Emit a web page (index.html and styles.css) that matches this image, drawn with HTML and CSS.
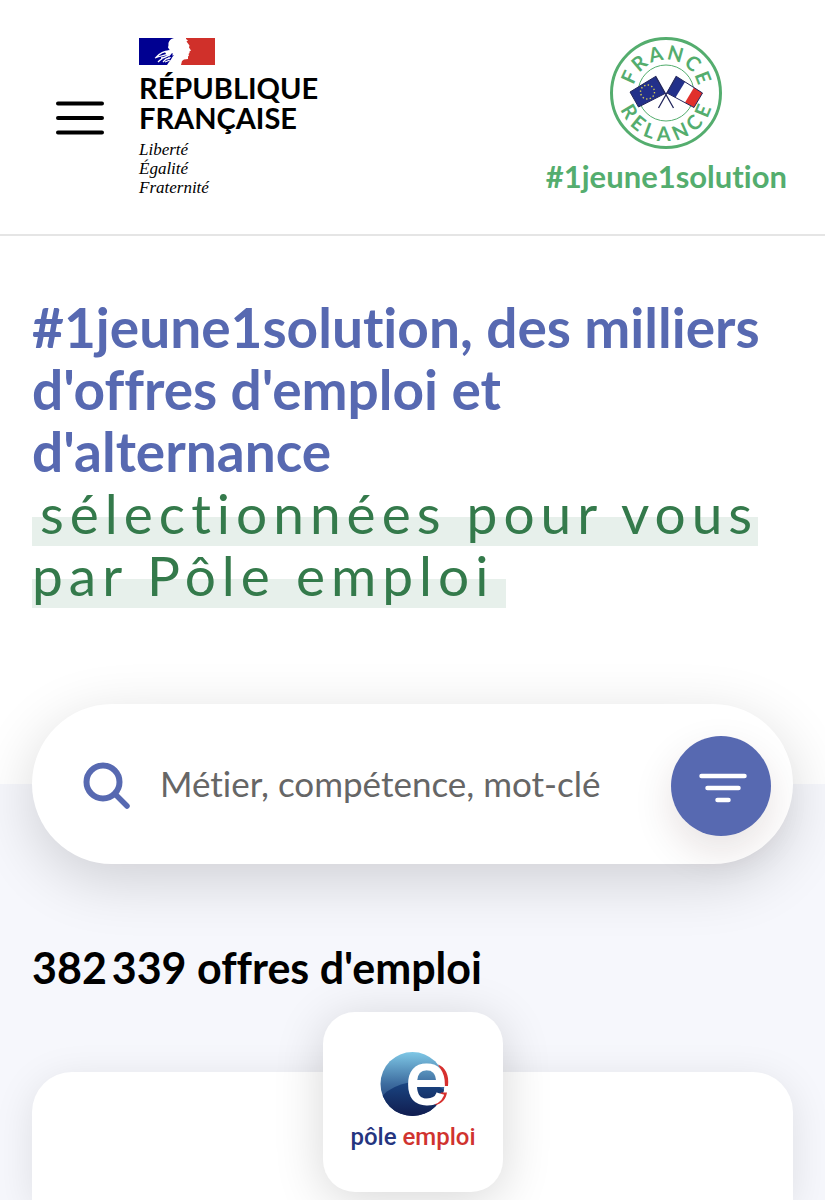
FILE: index.html
```html
<!DOCTYPE html>
<html lang="fr">
<head>
<meta charset="utf-8">
<meta name="viewport" content="width=device-width, initial-scale=1">
<title>#1jeune1solution – Offres d'emploi</title>
<link rel="stylesheet" href="styles.css">
</head>
<body>
<header class="header">
  <button class="menu" type="button" aria-label="Menu">
    <svg width="48" height="34" viewBox="0 0 48 34" fill="none" stroke="#000" stroke-width="4" stroke-linecap="round"><path d="M2 2.500H46M2 17H46M2 31.500H46"/></svg>
  </button>
  <a class="state" href="#">
    <svg class="flag" width="76" height="27" viewBox="0 0 76 27" aria-hidden="true">
      <path fill="#000091" d="M0 0H35C31 1 29 4 29.500 7L29 9.500L31 12.500L33 14V20L30 24L28 27H0Z"/>
      <path fill="#d0302a" d="M47 0H76V27H42L43 23L45 21.500L49 21L49 18.500L50 17.500L49.500 16L50.500 15L50.500 13.500L52 12.500L50 9.500L50.500 7.500L47.500 3.500L49 2.500L47 1Z"/>
      <path fill="none" stroke="#fff" stroke-width="1.300" d="M30 13C25 13 21 15 17 19.500M31 15C27 18 22 17 16 20M31 17C27 18 26 20 22 20M24 20C21 22 20 23 19 24M31 20L27 21L24 24M31 22L26 24"/>
      <path fill="#fff" d="M26 14L33 11L36 16L32 21L29 20L31 17L27 16Z"/>
      <path fill="none" stroke="#000091" stroke-width="1.200" d="M33.500 15.500L31 18.500L33.500 18L30.500 22"/>
    </svg>
    <span class="state-name">RÉPUBLIQUE<br>FRANÇAISE</span>
    <span class="motto">Liberté<br>Égalité<br>Fraternité</span>
  </a>
  <a class="brand" href="#">
    <svg class="seal" width="114" height="114" viewBox="0 0 114 114" role="img" aria-label="France Relance">
      <defs>
        <path id="arc-top" d="M24 57A33 33 0 0 1 90 57"/>
        <path id="arc-bottom" d="M9 57A48 48 0 0 0 105 57"/>
      </defs>
      <circle cx="57" cy="57" r="54.500" fill="#fff" stroke="#54ad6e" stroke-width="3"/>
      <circle cx="57" cy="57" r="28" fill="none" stroke="#54ad6e" stroke-width="1"/>
      <text class="seal-text" text-anchor="middle"><textPath href="#arc-top" startOffset="51%">FRANCE</textPath></text>
      <text class="seal-text seal-text-bottom" text-anchor="middle"><textPath href="#arc-bottom" startOffset="52%">RELANCE</textPath></text>
      <path stroke="#22265c" stroke-width="1.300" d="M46.500 40L64.500 72M67.500 40L49.500 72"/>
      <path fill="#22308a" stroke="#22265c" stroke-width="1" d="M21 56L46.500 40.500L56 57.500L29.500 71Z"/>
      <circle cx="38.500" cy="56" r="7" fill="none" stroke="#d7cf55" stroke-width="1.400" stroke-dasharray="1.400 2.265"/>
      <path fill="#fff" d="M67.500 40.500L93.500 57L85 71.500L58 57Z"/>
      <path fill="#22308a" d="M67.500 40.500L76 46L66.500 61.500L58 57Z"/>
      <path fill="#e1302c" d="M85 51.500L93.500 57L85 71.500L76 66.500Z"/>
      <path fill="none" stroke="#22265c" stroke-width="1" d="M67.500 40.500L93.500 57L85 71.500L58 57Z"/>
    </svg>
    <span class="brand-name">#1jeune1solution</span>
  </a>
</header>

<main class="main">
  <section class="hero">
    <h1 class="title">#1jeune1solution, des milliers d'offres d'emploi et d'alternance
      <span class="title-accent"><mark>sélectionnées pour vous par Pôle emploi</mark></span></h1>
    <form class="search" role="search">
      <svg class="search-icon" width="48" height="48" viewBox="0 0 48 48" fill="none" stroke="#5769b1" stroke-width="6" stroke-linecap="round" aria-hidden="true"><circle cx="20" cy="20" r="16.500"/><path d="M32 32L44 44" stroke-width="5.500"/></svg>
      <input class="search-input" type="search" placeholder="Métier, compétence, mot-clé" aria-label="Métier, compétence, mot-clé">
      <button class="filter" type="button" aria-label="Filtres">
        <svg width="48" height="30" viewBox="0 0 48 30" fill="none" stroke="#fff" stroke-width="4.500" stroke-linecap="round"><path d="M2.500 3H45.500M8.500 15H39.500M18.500 27H29.500"/></svg>
      </button>
    </form>
  </section>

  <section class="results">
    <h2 class="count">382<span class="thousands">&nbsp;</span>339 offres d'emploi</h2>
    <article class="card">
      <div class="logo">
        <svg width="180" height="180" viewBox="0 0 180 180" role="img" aria-label="pôle emploi">
          <defs>
            <linearGradient id="ball" x1="0" y1="0" x2="0" y2="1"><stop offset="0" stop-color="#7fc8e6"/><stop offset=".5" stop-color="#3d6c9f"/><stop offset="1" stop-color="#152c66"/></linearGradient>
            <linearGradient id="shade" x1="0" y1="0" x2="0" y2="1"><stop offset="0" stop-color="#1a4683"/><stop offset=".5" stop-color="#111f52"/></linearGradient>
            <clipPath id="disc"><circle cx="89.500" cy="72" r="32"/></clipPath>
          </defs>
          <circle cx="89.500" cy="72" r="32" fill="url(#ball)"/>
          <ellipse cx="94" cy="102" rx="42" ry="32" fill="url(#shade)" clip-path="url(#disc)"/>
          <path fill="#d7302e" d="M115 52.500C122 55 126.500 63 125 74H119V60ZM124 80.500C123 87 119 92 112 93L118 80.500Z"/>
          <text class="logo-e" x="83" y="92">e</text>
          <text class="logo-name" x="90" y="133" text-anchor="middle"><tspan fill="#25357f">pôle</tspan> <tspan fill="#d0332f">emploi</tspan></text>
        </svg>
      </div>
    </article>
  </section>
</main>
</body>
</html>
```

FILE: styles.css
```css
* {
  box-sizing: border-box;
}

body {
  margin: 0;
  min-height: 100vh;
  display: flex;
  flex-direction: column;
  background: #fff;
  color: #000;
  font-family: Lato, "Open Sans", sans-serif;
  font-variant-ligatures: none;
}

a {
  color: inherit;
  text-decoration: none;
}

button {
  border: 0;
  padding: 0;
  background: none;
  cursor: pointer;
}

svg {
  display: block;
}

/* Header */

.header {
  display: flex;
  align-items: flex-start;
  padding: 36px 38px 37px 56px;
  border-bottom: 2px solid #e5e5e5;
}

.menu {
  align-self: center;
  margin: 2px 35px 0 0;
}

.state {
  display: flex;
  flex-direction: column;
  padding-top: 2px;
}

.state-name {
  margin-top: 8px;
  font-size: 29px;
  font-weight: 700;
  line-height: 30px;
}

.motto {
  margin-top: 7px;
  font-family: "Liberation Serif", serif;
  font-style: italic;
  font-size: 17px;
  line-height: 19px;
}

.brand {
  display: flex;
  flex-direction: column;
  align-items: center;
  margin-left: auto;
  color: #54ad6e;
}

.seal-text {
  fill: #54ad6e;
  font-size: 20px;
  font-weight: 700;
  letter-spacing: 2px;
}

.seal-text-bottom {
  letter-spacing: 5px;
}

.brand-name {
  margin-top: 8px;
  font-size: 31px;
  font-weight: 700;
  line-height: 36px;
}

/* Title and search */

.main {
  flex: 1;
  display: flex;
  flex-direction: column;
}

.hero {
  padding: 60px 32px 0;
}

.title {
  margin: 0;
  color: #5769b1;
  font-size: 55px;
  font-weight: 700;
  line-height: 62px;
}

.title-accent {
  display: block;
  color: #347a4b;
  font-weight: 400;
  letter-spacing: 6px;
}

.title-accent mark {
  padding: 0 12px 0 8px;
  color: inherit;
  background: linear-gradient(transparent 56%, #e7f0eb 56%);
}

.search {
  display: flex;
  align-items: center;
  position: relative;
  height: 160px;
  margin-top: 98px;
  padding: 4px 22px 0 51px;
  border-radius: 80px;
  background: #fff;
  box-shadow: 0 16px 60px rgba(0, 0, 0, 0.16);
}

.search-input {
  flex: 1;
  min-width: 0;
  margin: 0 16px 6px 29px;
  padding: 0;
  border: 0;
  outline: 0;
  background: none;
  font: 400 35px/44px Lato, "Open Sans", sans-serif;
  font-variant-ligatures: none;
}

.search-input::placeholder {
  color: #666;
  opacity: 1;
}

.filter {
  display: grid;
  place-items: center;
  width: 100px;
  height: 100px;
  padding: 4px 0 0 4px;
  border-radius: 50%;
  background: #5769b1;
  box-shadow: 0 16px 40px rgba(60, 20, 20, 0.12);
}

/* Results */

.results {
  flex: 1;
  display: flex;
  flex-direction: column;
  margin-top: -80px;
  padding: 160px 32px 0;
  background: #f6f7fc;
}

.count {
  margin: 0;
  font-size: 43px;
  font-weight: 700;
  line-height: 48px;
}

.thousands {
  font-size: 20px;
  line-height: 20px;
}

.card {
  flex: 1;
  display: flex;
  justify-content: center;
  align-items: flex-start;
  margin-top: 80px;
  border-radius: 40px 40px 0 0;
  background: #fff;
  box-shadow: 0 8px 40px rgba(0, 0, 0, 0.1);
}

.logo {
  width: 180px;
  height: 180px;
  margin-top: -60px;
  border-radius: 32px;
  background: #fff;
  box-shadow: 0 8px 50px rgba(0, 0, 0, 0.16);
}

.logo-e {
  font-family: "Liberation Sans", sans-serif;
  font-size: 74px;
  fill: #fff;
  stroke: #fff;
  stroke-width: 2;
}

.logo-name {
  font-family: Roboto, sans-serif;
  font-size: 24px;
  font-weight: 500;
}
```
